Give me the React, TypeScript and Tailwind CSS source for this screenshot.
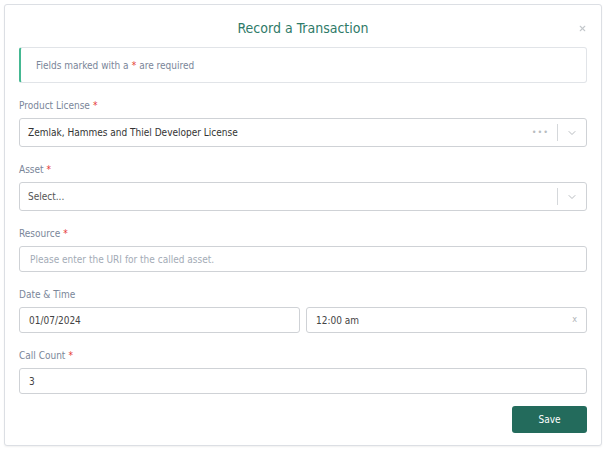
import { ChevronDown, X } from "lucide-react";

const font = { fontFamily: '"Liberation Sans Narrow", "DejaVu Sans Condensed", "Roboto", sans-serif' };

function Req() {
  return <span className="text-[#e53935] ml-[3px]">*</span>;
}

function Label({ children, required }: { children: React.ReactNode; required?: boolean }) {
  return (
    <div className="text-[10px] leading-[14px] text-[#7a8699] mb-[5px]">
      {children}
      {required && <Req />}
    </div>
  );
}

export default function App() {
  return (
    <div className="w-[606px] h-[453px] bg-white p-[4px]" style={font}>
      <div className="h-[442px] w-[598px] border border-[#dcdfe4] rounded-[3px] bg-white shadow-[0_1px_2px_rgba(0,0,0,0.06)] px-[14px]">
        {/* Header */}
        <div className="relative flex items-center justify-center h-[42px] pt-[4px]">
          <h2 className="text-[14px] text-[#2f7a68]">Record a Transaction</h2>
          <X className="absolute right-[0px] top-[19px] h-[9px] w-[9px] text-[#c4c8cc]" strokeWidth={3} />
        </div>

        {/* Alert */}
        <div className="h-[36px] border border-[#e1e4e8] border-l-2 border-l-[#45b892] rounded-[3px] flex items-center pl-[15px] text-[10px] text-[#7a8699]">
          Fields marked with a<Req /><span className="ml-[3px]">are required</span>
        </div>

        <div className="pt-[16px] space-y-[16px]">
          <div>
            <Label required>Product License</Label>
            <div className="h-[29px] border border-[#cfd2d6] rounded-[3px] flex items-center pl-[8px] text-[10px] text-[#333]">
              <span className="flex-1">Zemlak, Hammes and Thiel Developer License</span>
              <span className="text-[#b8bcc0] tracking-[1px] text-[9px] mr-[8px]">•••</span>
              <span className="w-px h-[17px] bg-[#d5d8db]" />
              <ChevronDown className="h-[12px] w-[12px] text-[#b8bcc0] mx-[8px]" />
            </div>
          </div>

          <div>
            <Label required>Asset</Label>
            <div className="h-[29px] border border-[#cfd2d6] rounded-[3px] flex items-center pl-[8px] text-[10px] text-[#555]">
              <span className="flex-1">Select...</span>
              <span className="w-px h-[17px] bg-[#d5d8db]" />
              <ChevronDown className="h-[12px] w-[12px] text-[#b8bcc0] mx-[8px]" />
            </div>
          </div>

          <div>
            <Label required>Resource</Label>
            <div className="h-[26px] border border-[#cfd2d6] rounded-[3px] flex items-center pl-[10px] text-[10px] text-[#a3abb6]">
              Please enter the URI for the called asset.
            </div>
          </div>

          <div>
            <Label>Date &amp; Time</Label>
            <div className="grid grid-cols-2 gap-[6px]">
              <div className="h-[26px] border border-[#cfd2d6] rounded-[3px] flex items-center pl-[9px] text-[10px] text-[#444]">
                01/07/2024
              </div>
              <div className="h-[26px] border border-[#cfd2d6] rounded-[3px] flex items-center pl-[9px] pr-[9px] text-[10px] text-[#444]">
                <span className="flex-1">12:00 am</span>
                <span className="text-[#b0b4b8] text-[9px]">x</span>
              </div>
            </div>
          </div>

          <div>
            <Label required>Call Count</Label>
            <div className="h-[26px] border border-[#cfd2d6] rounded-[3px] flex items-center pl-[9px] text-[10px] text-[#444]">
              3
            </div>
          </div>
        </div>

        <div className="flex justify-end mt-[12px]">
          <button className="w-[75px] h-[27px] rounded-[3px] bg-[#236b5c] text-white text-[10px]">Save</button>
        </div>
      </div>
    </div>
  );
}
